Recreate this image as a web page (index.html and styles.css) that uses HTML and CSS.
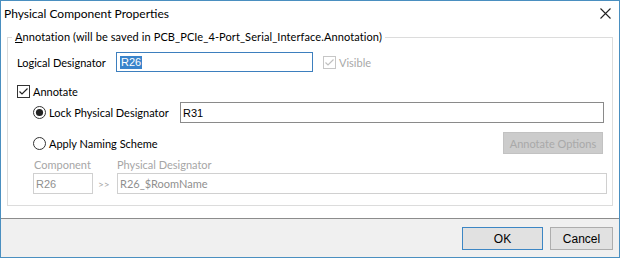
FILE: index.html
```html
<!DOCTYPE html>
<html>
<head>
<meta charset="utf-8">
<title>Physical Component Properties</title>
<link rel="stylesheet" href="styles.css">
</head>
<body>
<div class="window">
  <div class="titlebar">
    <span class="title">Physical Component Properties</span>
    <span class="close"><svg width="11" height="11" viewBox="0 0 11 11"><path d="M0.5 0.5 L10.5 10.5 M10.5 0.5 L0.5 10.5" stroke="#222" stroke-width="1.1" fill="none"/></svg></span>
  </div>
  <div class="content">
    <fieldset class="group">
      <legend><u>A</u>nnotation (will be saved in PCB_PCIe_4-Port_Serial_Interface.Annotation)</legend>
      <div class="row r1">
        <span class="lbl-logical">Logical Designator</span>
        <div class="input focus"><span class="sel">R26</span></div>
        <span class="check dis"><svg width="13" height="13" viewBox="0 0 13 13"><rect x="0.5" y="0.5" width="12" height="12" fill="#fff" stroke="#c6c6c6"/><path d="M2.5 6.5 L5 9 L10.5 3.5" stroke="#c0c0c0" stroke-width="1.2" fill="none"/></svg></span>
        <span class="dim">Visible</span>
      </div>
      <div class="row r2">
        <span class="check"><svg width="13" height="13" viewBox="0 0 13 13"><rect x="0.5" y="0.5" width="12" height="12" fill="#fff" stroke="#333"/><path d="M2.5 6.5 L5 9 L10.5 3.5" stroke="#222" stroke-width="1.2" fill="none"/></svg></span>
        <span>Annotate</span>
      </div>
      <div class="row r3">
        <span class="radio"><svg width="13" height="13" viewBox="0 0 13 13"><circle cx="6.5" cy="6.5" r="6" fill="#fff" stroke="#333"/><circle cx="6.5" cy="6.5" r="3.6" fill="#222"/></svg></span>
        <span class="lbl-lock">Lock Physical Designator</span>
        <div class="input lock">R31</div>
      </div>
      <div class="row r4">
        <span class="radio"><svg width="13" height="13" viewBox="0 0 13 13"><circle cx="6.5" cy="6.5" r="6" fill="#fff" stroke="#333"/></svg></span>
        <span>Apply Naming Scheme</span>
        <span class="btn-dis">Annotate Options</span>
      </div>
      <div class="row r5">
        <span class="lbl-comp">Component</span>
        <span>Physical Designator</span>
      </div>
      <div class="row r6">
        <div class="input dis comp">R26</div>
        <span class="arrows">&gt;&gt;</span>
        <div class="input dis phys">R26_$RoomName</div>
      </div>
    </fieldset>
  </div>
  <div class="footer">
    <span class="btn default">OK</span>
    <span class="btn cancel">Cancel</span>
  </div>
</div>
</body>
</html>
```
FILE: styles.css
```css
html, body { margin: 0; padding: 0; background: #fff; }
.window {
  width: 620px; height: 258px; box-sizing: border-box;
  border: 1px solid #4a8fc0;
  display: flex; flex-direction: column;
  background: #fff;
  font-family: Lato, "Open Sans", sans-serif; font-size: 11px; color: #000;
}
.titlebar {
  flex: none; height: 25px;
  display: flex; align-items: center; justify-content: space-between;
  padding: 0 8px 0 3px;
}
.title { font-size: 12px; }
.close svg { display: block; }
.content { flex: 1; padding-top: 4px; }
.group {
  margin: 0 6px; border: 1px solid #dcdcdc;
  padding: 8px 8px 11px 9px; min-width: 0;
}
.group legend {
  padding: 0 3px; margin-left: -5px; line-height: 14px; font-size: 11px;
  letter-spacing: 0.1px;
}
.row { display: flex; align-items: center; }
.check, .radio { display: flex; flex: none; margin-right: 3px; }
.r1 { height: 20px; }
.lbl-logical { width: 99px; }
.input {
  box-sizing: border-box; display: flex; align-items: center;
  border: 1px solid #8a8a8a; background: #fff;
  font-family: "Liberation Sans", Arial, sans-serif; font-size: 11px;
  padding-left: 2px; white-space: nowrap;
}
.input.focus { width: 197px; height: 20px; border-color: #3d7fbe; padding-left: 3px; }
.sel { background: #3a84cb; color: #fff; line-height: 13px; padding: 0 1px; }
.r1 .check { margin-left: 10px; }
.dim { color: #a8a8a8; }
.r2 { height: 14px; margin-top: 12px; }
.r3 { height: 21px; margin-top: 4px; padding-left: 16px; }
.lbl-lock { width: 131px; }
.input.lock { width: 424px; height: 21px; }
.r4 { height: 22px; margin-top: 9px; padding-left: 16px; }
.btn-dis {
  margin-left: auto; margin-right: 1px;
  box-sizing: border-box; width: 100px; height: 22px;
  display: flex; align-items: center; justify-content: center;
  background: #cccccc; border: 1px solid #c2c2c2; color: #a9a9a9;
}
.r5 { height: 14px; margin-top: 3px; padding-left: 17px; color: #a6a6a6; }
.lbl-comp { width: 83px; }
.r6 { height: 21px; margin-top: 2px; padding-left: 16px; }
.input.dis { border-color: #d0d0d0; color: #8f8f8f; height: 21px; }
.input.comp { width: 60px; }
.arrows { width: 24px; box-sizing: border-box; padding-left: 5px; color: #a6a6a6; font-size: 10px; }
.input.phys { width: 490px; margin-right: -3px; font-family: Lato, sans-serif; }
.footer {
  flex: none; height: 39px; box-sizing: border-box;
  border-top: 1px solid #8c8c8c; background: #f0f0f0;
  display: flex; justify-content: flex-end; align-items: flex-start;
  padding: 8px 6px 0 0; gap: 7px;
}
.btn {
  box-sizing: border-box; height: 23px;
  display: flex; align-items: center; justify-content: center;
  background: #e1e1e1; border: 1px solid #adadad;
  font-family: "Liberation Sans", Arial, sans-serif; font-size: 12px;
}
.btn.default { width: 81px; border-color: #3c86c4; }
.btn.cancel { width: 63px; }
```
